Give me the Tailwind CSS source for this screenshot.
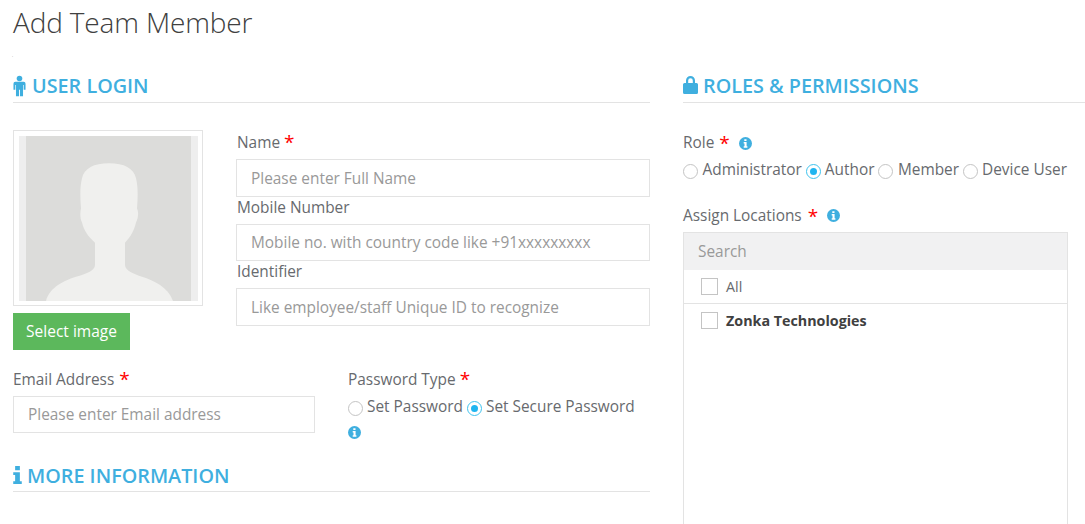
<!DOCTYPE html>
<html lang="en">
<head>
    <meta charset="UTF-8">
    <title>Add Team Member</title>
    <script src="https://cdn.jsdelivr.net/npm/@tailwindcss/browser@4"></script>
</head>
<body class="bg-white font-['Open_Sans',sans-serif] text-[15.4px] text-[#676a6e] h-[524px] overflow-hidden">
    <h1 class="pl-[13px] pt-[3px] h-[53px] text-[28px] leading-[38px] font-light text-[#404040] tracking-[-0.15px]">Add Team Member</h1>
    <p class="pl-[12px] h-[21px] text-[4px] leading-[6px] text-[#555]">.</p>

    <div class="flex pl-[13px]">
        <!-- Left column -->
        <div class="w-[637px] shrink-0">
            <h2 class="flex items-center gap-[6px] h-[29px] pb-[4px] border-b border-[#e3e3e3] text-[19.8px] leading-[22px] font-semibold text-[#3fafdf]">
                <svg class="w-[13px] h-[22px]" viewBox="0 0 14 22" fill="currentColor"><circle cx="7" cy="3" r="3"/><path d="M2.500 6.500h9a2 2 0 0 1 2 2V15h-2v-5h-.7v12H7.500v-7h-1v7H3.200V10h-.7v5h-2V8.500a2 2 0 0 1 2-2z"/></svg>
                USER LOGIN
            </h2>

            <div class="flex mt-[27px]">
                <div class="w-[190px] shrink-0">
                    <div class="h-[176px] border border-[#e3e3e3] pt-[5px] pb-[4px] pl-[5px] pr-[4px]">
                        <div class="h-full bg-[#eeeeee] px-[7px]">
                            <svg class="w-full h-full block" viewBox="0 0 165 164" preserveAspectRatio="none">
                                <rect width="165" height="164" fill="#dcdcda"/>
                                <path d="M20 164C24 150 38 144 50 140C60 137 69 134 69 128L69 106C62 100 58 94 56 86C54 82 54 76 55 72C54 60 54 50 56 42C58 32 68 27 83 27C98 27 108 32 110 42C112 50 112 60 111 72C113 76 112 82 110 86C108 94 105 100 99 106L99 128C99 134 108 137 116 140C128 144 142 150 147 164Z" fill="#f0f0ee"/>
                            </svg>
                        </div>
                    </div>
                    <button class="mt-[7px] w-[117px] h-[37px] bg-[#5cb85c] text-white text-[15.5px]">Select image</button>
                </div>

                <div class="ml-[33px] flex-1">
                    <label class="block mt-[2px] pl-[1px] h-[27px] leading-[21px]">Name <span class="text-[#f00] text-[19px] leading-[16px] relative top-[1px]">*</span></label>
                    <input class="block w-full h-[38px] border border-[#e3e3e3] px-[14px] placeholder:text-[#999]" placeholder="Please enter Full Name">
                    <label class="block pl-[1px] h-[27px] leading-[21px]">Mobile Number</label>
                    <input class="block w-full h-[37px] border border-[#e3e3e3] px-[14px] placeholder:text-[#999]" placeholder="Mobile no. with country code like +91xxxxxxxxx">
                    <label class="block pl-[1px] h-[27px] leading-[21px]">Identifier</label>
                    <input class="block w-full h-[38px] border border-[#e3e3e3] px-[14px] placeholder:text-[#999]" placeholder="Like employee/staff Unique ID to recognize">
                </div>
            </div>

            <div class="flex mt-[18px]">
                <div class="w-[302px] shrink-0">
                    <label class="block h-[28px] leading-[24px]">Email Address <span class="text-[#f00] text-[19px] leading-[16px] ml-[1px] relative top-[1px]">*</span></label>
                    <input class="block w-full h-[37px] border border-[#e3e3e3] px-[14px] placeholder:text-[#999]" placeholder="Please enter Email address">
                </div>
                <div class="ml-[33px]">
                    <label class="block h-[28px] leading-[24px]">Password Type <span class="text-[#f00] text-[19px] leading-[16px] relative top-[1px]">*</span></label>
                    <div class="flex items-center h-[22px]">
                        <span class="w-[15px] h-[15px] mt-[2px] rounded-full border border-[#c4c4c4]"></span>
                        <span class="ml-[4px]">Set Password</span>
                        <span class="ml-[4px] w-[15px] h-[15px] mt-[2px] rounded-full border border-[#3fc3ee] flex items-center justify-center"><span class="w-[7px] h-[7px] rounded-full bg-[#1fb5f0]"></span></span>
                        <span class="ml-[4px]">Set Secure Password</span>
                    </div>
                    <svg class="w-[13px] h-[13px] mt-[8px]" viewBox="0 0 13 13"><circle cx="6.500" cy="6.500" r="6.500" fill="#3fafdf"/><path d="M5.300 2.200h2.200v1.900H5.300zM4.700 5.100h2.900v4.200h.8v1.400H4.700V9.300h.8V6.500h-.8z" fill="#fff"/></svg>
                </div>
            </div>

            <h2 class="flex items-center gap-[5px] mt-[25px] h-[28px] pb-[3px] border-b border-[#e3e3e3] text-[19.8px] leading-[22px] font-semibold text-[#3fafdf]">
                <svg class="w-[9px] h-[18px] mb-[3px]" viewBox="0 0 9 19" fill="currentColor"><path d="M2 0h5v4.500H2zM0 6.500h7v9.500h2v3H0v-3h2V9.500H0z"/></svg>
                MORE INFORMATION
            </h2>
        </div>

        <!-- Right column -->
        <div class="ml-[33px] flex-1">
            <h2 class="flex items-center gap-[5px] h-[29px] pb-[4px] border-b border-[#e3e3e3] text-[19.8px] leading-[22px] font-semibold text-[#3fafdf]">
                <svg class="w-[15px] h-[18px] mb-[3px]" viewBox="0 0 15 18" fill="currentColor"><path fill-rule="evenodd" d="M3 7V4.500a4.500 4.500 0 0 1 9 0V7h1.500A1.500 1.500 0 0 1 15 8.500v8a1.500 1.500 0 0 1-1.500 1.500h-12A1.500 1.500 0 0 1 0 16.500v-8A1.500 1.500 0 0 1 1.500 7zm2.200 0h4.600V4.500a2.300 2.300 0 0 0-4.600 0z"/></svg>
                ROLES &amp; PERMISSIONS
            </h2>

            <label class="flex items-center mt-[26px] h-[28px]">Role <span class="text-[#f00] text-[19px] leading-[16px] ml-[5px]">*</span>
                <svg class="w-[13px] h-[13px] ml-[9px]" viewBox="0 0 13 13"><circle cx="6.500" cy="6.500" r="6.500" fill="#3fafdf"/><path d="M5.300 2.200h2.200v1.900H5.300zM4.700 5.100h2.900v4.200h.8v1.400H4.700V9.300h.8V6.500h-.8z" fill="#fff"/></svg>
            </label>
            <div class="flex items-center h-[26px]">
                <span class="w-[15px] h-[15px] mt-[2px] rounded-full border border-[#c4c4c4]"></span>
                <span class="ml-[4.500px]">Administrator</span>
                <span class="ml-[4px] w-[15px] h-[15px] mt-[2px] rounded-full border border-[#3fc3ee] flex items-center justify-center"><span class="w-[7px] h-[7px] rounded-full bg-[#1fb5f0]"></span></span>
                <span class="ml-[4px]">Author</span>
                <span class="ml-[4px] w-[15px] h-[15px] mt-[2px] rounded-full border border-[#c4c4c4]"></span>
                <span class="ml-[4.500px]">Member</span>
                <span class="ml-[4px] w-[15px] h-[15px] mt-[2px] rounded-full border border-[#c4c4c4]"></span>
                <span class="ml-[4px]">Device User</span>
            </div>

            <label class="flex items-center mt-[19px] mb-[3px] h-[27px]">Assign Locations <span class="text-[#f00] text-[19px] leading-[16px] ml-[6px]">*</span>
                <svg class="w-[13px] h-[13px] ml-[9px]" viewBox="0 0 13 13"><circle cx="6.500" cy="6.500" r="6.500" fill="#3fafdf"/><path d="M5.300 2.200h2.200v1.900H5.300zM4.700 5.100h2.900v4.200h.8v1.400H4.700V9.300h.8V6.500h-.8z" fill="#fff"/></svg>
            </label>
            <div class="w-[385px] h-[300px] border border-[#e3e3e3]">
                <div class="h-[37px] bg-[#f1f1f2] px-[14px] leading-[37px] text-[#999]">Search</div>
                <div class="flex items-center h-[34px] px-[17px] border-b border-[#e3e3e3]">
                    <span class="w-[17px] h-[17px] border border-[#c4c4c4]"></span>
                    <span class="ml-[8px] text-[14.3px]">All</span>
                </div>
                <div class="flex items-center h-[33px] px-[17px]">
                    <span class="w-[17px] h-[17px] border border-[#c4c4c4]"></span>
                    <span class="ml-[8px] text-[14.3px] font-bold text-[#404040]">Zonka Technologies</span>
                </div>
            </div>
        </div>
    </div>
</body>
</html>
